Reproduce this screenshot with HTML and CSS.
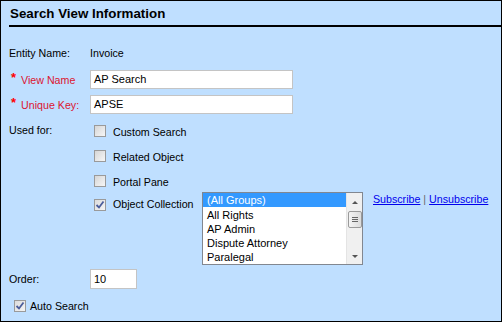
FILE: index.html
```html
<!DOCTYPE html>
<html lang="en">
<head>
  <meta charset="UTF-8" />
  <title>Search View Information</title>
  <link rel="stylesheet" href="styles.css">
</head>
<body>
  <div class="panel">
    <div class="panel-title">Search View Information</div>
    <div class="form">
      <div class="row entity-row">
        <span class="label">Entity Name:</span>
        <span class="value">Invoice</span>
      </div>
      <div class="row field-row">
        <span class="label required"><b class="star">*</b>View Name</span>
        <div class="textbox wide">AP Search</div>
      </div>
      <div class="row field-row second">
        <span class="label required"><b class="star">*</b>Unique Key:</span>
        <div class="textbox wide">APSE</div>
      </div>
      <div class="row used-row">
        <span class="label used-label">Used for:</span>
        <div class="options">
          <div class="option"><span class="check"></span><span class="opt-text">Custom Search</span></div>
          <div class="option"><span class="check"></span><span class="opt-text">Related Object</span></div>
          <div class="option"><span class="check"></span><span class="opt-text">Portal Pane</span></div>
          <div class="option collection">
            <span class="check checked">
              <svg width="10" height="10" viewBox="0 0 10 10"><path d="M1.5 5 L4 7.5 L8.5 1.5" fill="none" stroke="#4b5d9b" stroke-width="1.8"/></svg>
            </span>
            <span class="opt-text coll-text">Object Collection</span>
            <div class="listbox">
              <div class="items">
                <div class="item selected">(All Groups)</div>
                <div class="item">All Rights</div>
                <div class="item">AP Admin</div>
                <div class="item">Dispute Attorney</div>
                <div class="item">Paralegal</div>
              </div>
              <div class="scrollbar">
                <span class="arrow up"></span>
                <span class="thumb"><i></i><i></i><i></i></span>
                <span class="arrow down"></span>
              </div>
            </div>
            <div class="links"><a href="#">Subscribe</a> <span class="sep">|</span> <a href="#">Unsubscribe</a></div>
          </div>
        </div>
      </div>
      <div class="row order-row">
        <span class="label">Order:</span>
        <div class="textbox small">10</div>
      </div>
      <div class="auto-row">
        <span class="check checked">
          <svg width="10" height="10" viewBox="0 0 10 10"><path d="M1.5 5 L4 7.5 L8.5 1.5" fill="none" stroke="#4b5d9b" stroke-width="1.8"/></svg>
        </span>
        <span class="opt-text">Auto Search</span>
      </div>
    </div>
  </div>
</body>
</html>
```

FILE: styles.css
```css
* { box-sizing: border-box; margin: 0; padding: 0; }
body {
  font-family: "Liberation Sans", Arial, sans-serif;
  font-size: 8pt;
  color: #000;
  background: #fff;
}
.panel {
  width: 502px;
  height: 322px;
  border: 1px solid #000;
  background: #bfdfff;
}
.panel-title {
  margin-left: 8px;
  padding: 4px 0 3px 1px;
  font-size: 10pt;
  font-weight: bold;
  line-height: 17px;
  border-bottom: 2px solid #000;
}
.form { padding-left: 8px; }
.row {
  display: grid;
  grid-template-columns: 81px 1fr;
  align-items: center;
}
.label, .value, .opt-text { line-height: 14px; }
.entity-row { margin-top: 19px; }
.field-row { margin-top: 10px; }
.field-row.second { margin-top: 6px; }
.required { color: #dc1430; padding-left: 2px; }
.star { color: #f00; font-size: 13px; margin-right: 5px; position: relative; top: -2px; }
.textbox {
  height: 19px;
  background: #fff;
  border: 1px solid #c4c4c4;
  padding-left: 3px;
  font-size: 11px;
  line-height: 17px;
}
.textbox.wide { width: 203px; }
.textbox.small { width: 47px; height: 20px; line-height: 18px; }

.used-row { margin-top: 3px; align-items: start; }
.used-label { padding-top: 6px; }
.options { display: flex; flex-direction: column; }
.option {
  display: flex;
  align-items: center;
  height: 25px;
  padding-top: 3px;
}
.option .opt-text { padding-top: 2px; }
.check {
  width: 12px;
  height: 12px;
  margin-left: 4px;
  margin-right: 7px;
  border: 1px solid #9a9a9a;
  background: linear-gradient(135deg, #d6d6d6, #f6f6f6);
  display: flex;
  align-items: center;
  justify-content: center;
}
.check.checked { background: linear-gradient(135deg, #dcdcdc, #f4f4f4); }
.option.collection {
  height: auto;
  align-items: flex-start;
  padding-top: 0;
}
.collection .check { margin-top: 7px; }
.option .coll-text { width: 89px; padding-top: 5px; }
.listbox {
  display: flex;
  width: 161px;
  height: 73px;
  border: 1px solid #828790;
  background: #fff;
}
.items { flex: 1; font-size: 11px; }
.item { height: 14px; line-height: 16px; padding-left: 4px; }
.item.selected { background: #3399ff; color: #fff; line-height: 14px; }
.scrollbar {
  width: 16px;
  background: #f0f0f0;
  border-left: 1px solid #e4e4e4;
  position: relative;
}
.arrow {
  position: absolute;
  left: 5px;
  width: 0;
  height: 0;
  border-left: 3px solid transparent;
  border-right: 3px solid transparent;
}
.arrow.up { top: 8px; border-bottom: 3px solid #555; }
.arrow.down { bottom: 6px; border-top: 3px solid #555; }
.thumb {
  position: absolute;
  top: 18px;
  left: 1px;
  width: 14px;
  height: 17px;
  border: 1px solid #9a9a9a;
  border-radius: 2px;
  background: linear-gradient(90deg, #f4f4f4, #dcdcdc);
  display: flex;
  flex-direction: column;
  align-items: center;
  justify-content: center;
  gap: 1px;
}
.thumb i { display: block; width: 6px; height: 1px; background: #666; }
.links { margin-left: 10px; line-height: 14px; }
.links a { color: #0000ee; }
.sep { color: #666; }

.order-row { margin-top: 4px; }
.auto-row {
  display: flex;
  align-items: center;
  margin-top: 10px;
  height: 14px;
}
.auto-row .check { margin-right: 4px; margin-left: 5px; }
```
